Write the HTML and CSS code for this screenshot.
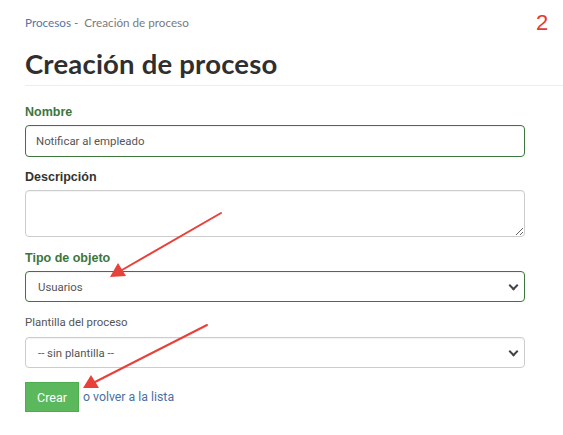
FILE: index.html
```html
<!DOCTYPE html>
<html lang="es">
    <head>
        <meta charset="UTF-8" />
        <meta name="viewport" content="width=device-width, initial-scale=1.0" />
        <title>Creación de proceso</title>
        <link rel="stylesheet" href="styles.css">
    </head>
    <body>
        <div class="container">
            <div class="breadcrumb">
                <a href="#">Procesos</a> -&nbsp; <span>Creación de proceso</span>
            </div>
            <header>
                <h1>Creación de proceso</h1>
            </header>

            <form action="javascript:void(0)" class="process-form">
                <div class="field has-success">
                    <label for="nombre">Nombre</label>
                    <input type="text" id="nombre" value="Notificar al empleado" />
                </div>
                <div class="field">
                    <label for="descripcion">Descripción</label>
                    <textarea id="descripcion"></textarea>
                </div>
                <div class="field has-success">
                    <label for="tipo">Tipo de objeto</label>
                    <div class="select-wrap">
                        <select id="tipo">
                            <option>Usuarios</option>
                        </select>
                    </div>
                </div>
                <div class="field">
                    <label for="plantilla" class="plain">Plantilla del proceso</label>
                    <div class="select-wrap">
                        <select id="plantilla">
                            <option>-- sin plantilla --</option>
                        </select>
                    </div>
                </div>
                <div class="actions">
                    <input type="submit" value="Crear" class="create" />
                    <span class="back">o <a href="#">volver a la lista</a></span>
                </div>
            </form>
        </div>

        <!-- anotaciones del pantallazo -->
        <div class="step-number">2</div>
        <svg class="arrows" width="563" height="435" viewBox="0 0 563 435">
            <g stroke="#e8413a" stroke-width="2" fill="#e8413a" stroke-linecap="round">
                <line x1="221" y1="213" x2="122" y2="270" />
                <polygon points="110,277 118,263 126,276" stroke="none" />
                <line x1="207" y1="325" x2="95" y2="382" />
                <polygon points="83,388 91,375 99,388" stroke="none" />
            </g>
        </svg>
    </body>
</html>
```

FILE: styles.css
```css
* {
    box-sizing: border-box;
}
body {
    margin: 0;
    font-family: Roboto, "Liberation Sans", Arial, sans-serif;
    font-size: 12px;
    color: #333;
    background: #fff;
}
a {
    color: #4a6fa5;
    text-decoration: none;
}
.container {
    padding: 14px 0 0 25px;
}
.breadcrumb {
    font-family: Lato, "Liberation Sans", sans-serif;
    font-size: 11.7px;
    line-height: 17px;
    color: #7a7a7a;
}
.breadcrumb a {
    color: #5575a8;
}
header {
    margin-top: 18px;
    padding-bottom: 6px;
    border-bottom: 1px solid #eee;
}
header h1 {
    margin: 0;
    font-family: Lato, "Liberation Sans", sans-serif;
    font-size: 27.5px;
    line-height: 30px;
    font-weight: 700;
    color: #2f2f2f;
    letter-spacing: 0.2px;
}
.process-form {
    width: 500px;
    margin-top: 18px;
}
.field {
    margin-bottom: 14px;
}
.field:first-child {
    margin-bottom: 12px;
}
.field:nth-child(2) {
    margin-bottom: 13px;
}
.field:nth-child(3) {
    margin-bottom: 12px;
}
.field label {
    display: block;
    font-family: "Liberation Sans", Arial, sans-serif;
    font-size: 12.5px;
    font-weight: 700;
    line-height: 16px;
    margin-bottom: 5px;
    color: #333;
}
.field:nth-child(2) textarea {
    margin-top: 1px;
}
.field label.plain {
    font-family: Roboto, "Liberation Sans", sans-serif;
    font-size: 11.4px;
    font-weight: 400;
    color: #555;
    margin-bottom: 7px;
}
.has-success label {
    color: #3c763d;
}
input[type="text"],
textarea,
select {
    display: block;
    width: 100%;
    font-family: Roboto, "Liberation Sans", Arial, sans-serif;
    font-size: 11.4px;
    color: #555;
    background: #fff;
    border: 1px solid #ccc;
    border-radius: 4px;
    padding: 0 12px;
    box-shadow: inset 0 1px 1px rgba(0, 0, 0, 0.05);
}
input[type="text"] {
    height: 32px;
    padding: 0 10px;
}
textarea {
    height: 47px;
    resize: vertical;
}
.has-success input,
.has-success select {
    border-color: #3c763d;
}
.select-wrap {
    position: relative;
}
select {
    height: 31px;
    appearance: none;
    -webkit-appearance: none;
}
.select-wrap::after {
    content: "";
    position: absolute;
    right: 8px;
    top: 11px;
    width: 5px;
    height: 5px;
    border-right: 2px solid #444;
    border-bottom: 2px solid #444;
    transform: rotate(45deg);
    pointer-events: none;
}
.actions {
    display: flex;
    align-items: center;
    gap: 4px;
}
.create {
    width: 54px;
    height: 30px;
    border: 1px solid #4cae4c;
    background: #5cb85c;
    color: #fff;
    font-family: Roboto, "Liberation Sans", Arial, sans-serif;
    font-size: 12.5px;
    padding: 0;
    cursor: pointer;
}
.back {
    color: #4a6fa5;
    font-size: 12.3px;
}
.step-number {
    position: absolute;
    top: 10px;
    left: 536px;
    font-family: "Liberation Sans", Arial, sans-serif;
    font-size: 22px;
    color: #e53935;
}
.arrows {
    position: absolute;
    top: 0;
    left: 0;
    pointer-events: none;
}
```
